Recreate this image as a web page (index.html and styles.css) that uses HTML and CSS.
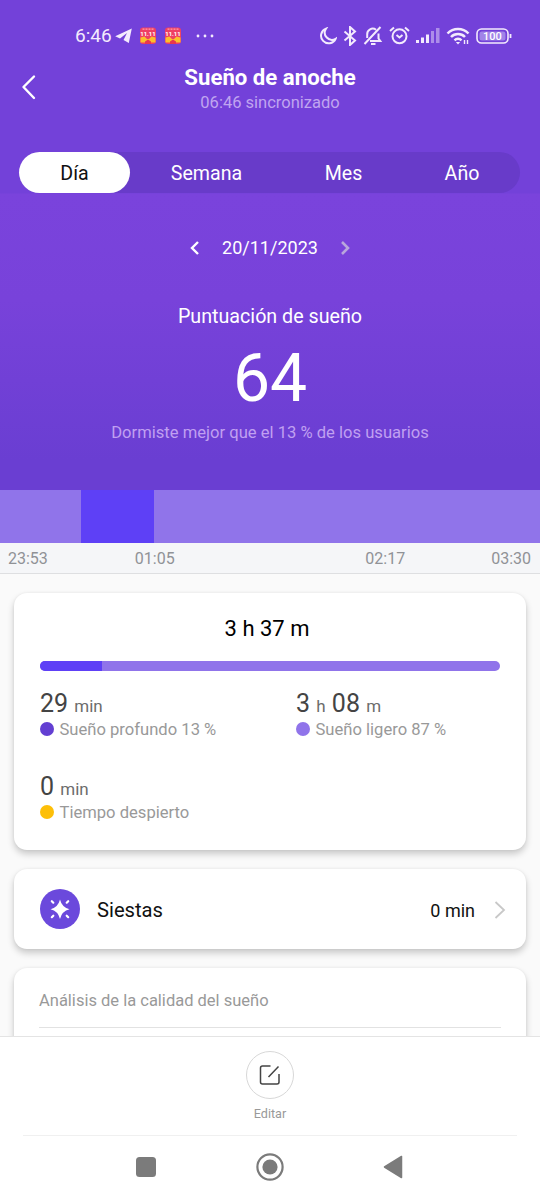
FILE: index.html
```
<!DOCTYPE html>
<html lang="es">
<head>
  <meta charset="UTF-8" />
  <meta name="viewport" content="width=device-width, initial-scale=1.0" />
  <title>Sueño de anoche</title>
  <link rel="stylesheet" href="styles.css">
</head>
<body>
  <div class="app">
    <section class="hero">
      <div class="status-bar">
        <span class="clock">6:46</span>
        <svg class="telegram" width="17" height="16" viewBox="0 0 17 16"><path d="M16.8 0.5L0.2 8.2l4.8 2.4L12 5 8.500 12l5.300 3z" fill="#f3eafd"/></svg>
        <svg class="sale" width="18" height="18" viewBox="0 0 18 18">
          <rect x="1" y="0.5" width="16" height="16.5" rx="3" fill="#ef3f63"/>
          <path d="M3.5 2.2h11" stroke="#ff9fae" stroke-width="1.2" stroke-dasharray="2 1"/>
          <text x="9" y="8.6" class="sale-text">11.11</text>
          <path d="M1.5 10.5l4-1 2.5 2.5h2l2.5-2.5 4 1v5h-15z" fill="#fbc02d"/>
          <path d="M6 14.500l3-2 3 2V17H6z" fill="#e8364f"/>
        </svg>
        <svg class="sale" width="18" height="18" viewBox="0 0 18 18">
          <rect x="1" y="0.5" width="16" height="16.5" rx="3" fill="#ef3f63"/>
          <path d="M3.5 2.2h11" stroke="#ff9fae" stroke-width="1.2" stroke-dasharray="2 1"/>
          <text x="9" y="8.6" class="sale-text">11.11</text>
          <path d="M1.5 10.5l4-1 2.5 2.5h2l2.5-2.5 4 1v5h-15z" fill="#fbc02d"/>
          <path d="M6 14.500l3-2 3 2V17H6z" fill="#e8364f"/>
        </svg>
        <svg class="more" width="18" height="4" viewBox="0 0 18 4" fill="#f3eafd"><circle cx="2" cy="2" r="1.4"/><circle cx="9" cy="2" r="1.4"/><circle cx="16" cy="2" r="1.4"/></svg>

        <div class="status-icons">
          <svg width="18" height="18" viewBox="0 0 18 18"><path d="M7 1.600A7.600 7.600 0 1 0 16.600 11.800 7.200 7.200 0 0 1 7 1.600z"/></svg>
          <svg width="14" height="20" viewBox="0 0 14 20"><path d="M1.5 5.5l10.5 9L7 19V1l5 4.5-10.5 9"/></svg>
          <svg width="20" height="20" viewBox="0 0 20 20"><path d="M17.500 1L1.500 18M4.200 12V8.500a5.500 5.500 0 0 1 8.800-4.800M15.500 7.500v5l1.800 2.500H7"/><path d="M8 18h4.500"/></svg>
          <svg width="21" height="19" viewBox="0 0 21 19"><circle cx="10.5" cy="10.3" r="7"/><path d="M7.5 9l3 2.5 3-2.5M1 5l4-3.500M20 5l-4-3.500"/></svg>
          <svg width="24" height="17" viewBox="0 0 24 17" class="signal"><rect x="0" y="13" width="3" height="3"/><rect x="5" y="10.5" width="3" height="5.5"/><rect x="10" y="7.5" width="3" height="8.5"/><rect x="15" y="4" width="3" height="12" opacity=".45"/><rect x="20" y="1" width="3.5" height="15" opacity=".45"/></svg>
          <svg width="24" height="18" viewBox="0 0 24 18"><path d="M1.500 6.500a14.500 14.500 0 0 1 21 0M5 10a9.800 9.800 0 0 1 14 0M8.500 13.300a5 5 0 0 1 7 0" stroke-width="2.5"/><path d="M9.800 15l2.200 2.500 2.200-2.500z" fill="#f3eafd" stroke="none"/><path d="M18.500 13v4M21.500 13v4" stroke-width="1.4"/></svg>
          <svg width="36" height="16" viewBox="0 0 36 16"><rect x="1" y="1" width="31" height="14" rx="4.5" stroke-width="1.6"/><rect x="3.5" y="3.5" width="26" height="9" rx="2.5" fill="#a184e8" stroke="none"/><path d="M34.500 6v4" stroke-width="1.8"/><text x="16.5" y="12.1" class="battery-text">100</text></svg>
        </div>
      </div>

      <header class="header">
        <svg class="back" width="16" height="26" viewBox="0 0 16 26"><path d="M13 2.500L2.500 13 13 24" fill="none" stroke="#fff" stroke-width="2.4" stroke-linecap="round" stroke-linejoin="round"/></svg>
        <div class="titles">
          <h1>Sueño de anoche</h1>
          <p class="synced">06:46 sincronizado</p>
        </div>
      </header>

      <nav class="tabs">
        <div class="tab active">Día</div>
        <div class="tab week">Semana</div>
        <div class="tab month">Mes</div>
        <div class="tab year">Año</div>
      </nav>

      <div class="date-picker">
        <svg width="10" height="14" viewBox="0 0 10 14"><path d="M8 1L2 7l6 6" fill="none" stroke="#fff" stroke-width="2.4"/></svg>
        <span class="date">20/11/2023</span>
        <svg width="10" height="14" viewBox="0 0 10 14"><path d="M2 1l6 6-6 6" fill="none" stroke="#b9a6dc" stroke-width="2.6"/></svg>
      </div>

      <p class="score-label">Puntuación de sueño</p>
      <p class="score">64</p>
      <p class="score-note">Dormiste mejor que el 13 % de los usuarios</p>
    </section>

    <div class="sleep-chart">
      <div class="light" style="width: 15%"></div>
      <div class="deep" style="width: 13.5%"></div>
      <div class="light" style="width: 71.5%"></div>
    </div>
    <div class="axis">
      <span>23:53</span>
      <span class="t2">01:05</span>
      <span class="t3">02:17</span>
      <span>03:30</span>
    </div>

    <main class="content">
      <section class="card summary">
        <h2>3 h 37 m</h2>
        <div class="bar"><div class="bar-deep" style="width: 13.4%"></div></div>
        <div class="stats">
          <div class="stat">
            <div class="value">29 <small>min</small></div>
            <div class="label"><i class="dot dot-deep"></i>Sueño profundo 13 %</div>
          </div>
          <div class="stat">
            <div class="value">3 <small>h</small> 08 <small>m</small></div>
            <div class="label"><i class="dot dot-light"></i>Sueño ligero 87 %</div>
          </div>
          <div class="stat">
            <div class="value">0 <small>min</small></div>
            <div class="label"><i class="dot dot-awake"></i>Tiempo despierto</div>
          </div>
        </div>
      </section>

      <section class="card naps">
        <svg width="40" height="40" viewBox="0 0 40 40">
          <circle cx="20" cy="20" r="20" fill="#6b49dc"/>
          <path d="M20 10.500Q21.800 18.200 29.500 20.300 21.800 22.200 20 30 18.200 22.200 10.500 20.300 18.200 18.200 20 10.500z" fill="#fff"/>
          <path d="M11.800 12.200l1.500 1.500M28.200 12.200l-1.500 1.500M11.800 28.200l1.500-1.500M28.200 28.200l-1.500-1.500" stroke="#fff" stroke-width="2.2" stroke-linecap="round"/>
        </svg>
        <span class="naps-title">Siestas</span>
        <span class="naps-value">0 min</span>
        <svg class="naps-arrow" width="12" height="18" viewBox="0 0 12 18"><path d="M1.500 1L10 9l-8.500 8" fill="none" stroke="#c8c8c8" stroke-width="1.8"/></svg>
      </section>

      <section class="card analysis">
        <h3>Análisis de la calidad del sueño</h3>
      </section>
    </main>

    <footer class="footer">
      <div class="edit">
        <div class="edit-btn">
          <svg width="22" height="22" viewBox="0 0 22 22"><path d="M11.500 2H3.500Q1.500 2 1.500 4v14q0 2 2 2h14.500q2 0 2-2v-8M9.500 13L19.500 2.500" fill="none" stroke="#444" stroke-width="1.5"/></svg>
        </div>
        <span>Editar</span>
      </div>
    </footer>
    <div class="system-nav">
      <svg width="20" height="20" viewBox="0 0 20 20"><rect width="20" height="20" rx="3.5" fill="#7b7b7b"/></svg>
      <svg width="28" height="28" viewBox="0 0 28 28"><circle cx="14" cy="14" r="12.6" fill="none" stroke="#7b7b7b" stroke-width="2.2"/><circle cx="14" cy="14" r="7.6" fill="#7b7b7b"/></svg>
      <svg width="20" height="24" viewBox="0 0 20 24"><path d="M18.500 1.500v21L1.500 12z" fill="#7b7b7b" stroke="#7b7b7b" stroke-width="1.5" stroke-linejoin="round"/></svg>
    </div>
  </div>
</body>
</html>
```
FILE: styles.css
```
* {
  box-sizing: border-box;
}

body {
  margin: 0;
  font-family: Roboto, sans-serif;
  background: #fff;
}

h1, h2, h3, p {
  margin: 0;
  font-weight: 400;
}

svg {
  display: block;
  flex-shrink: 0;
}

.app {
  display: flex;
  flex-direction: column;
  width: 540px;
  height: 1200px;
  overflow: hidden;
}

.hero {
  height: 490px;
  flex-shrink: 0;
  color: #fff;
  text-align: center;
  background: linear-gradient(#7341d9 0, #7341d9 193px, #7a43dc 194px, #7842da 300px, #6a3ed2 460px, #6a3ed2 100%);
}

.status-bar {
  display: flex;
  align-items: center;
  height: 55px;
  padding: 16px 28px 0 75px;
  color: #f3eafd;
}

.clock {
  font-size: 19px;
  line-height: 20px;
  width: 40px;
  text-align: left;
  white-space: nowrap;
}

.telegram {
  margin-right: 7px;
}

.sale {
  margin-right: 7px;
}

.sale-text {
  font-size: 6px;
  font-weight: 700;
  fill: #fff;
  text-anchor: middle;
}

.more {
  margin-left: 7px;
}

.status-icons {
  display: flex;
  align-items: center;
  margin-left: auto;
  gap: 6px;
}

.status-icons svg {
  fill: none;
  stroke: #f3eafd;
  stroke-width: 2;
}

.status-icons .signal {
  fill: #f3eafd;
  stroke: none;
}

.status-icons .battery-text {
  font-size: 11px;
  font-weight: 500;
  fill: #fff;
  stroke: none;
  text-anchor: middle;
}

.header {
  display: flex;
  height: 97px;
  padding: 8px 21px 0;
}

.back {
  margin-top: 11px;
}

.titles {
  flex: 1;
  margin-right: 16px;
}

h1 {
  font-size: 22.2px;
  font-weight: 700;
  line-height: 29px;
}

.synced {
  font-size: 16.5px;
  line-height: 22px;
  color: #c0a5f0;
}

.tabs {
  display: flex;
  height: 41px;
  margin: 0 20px 0 19px;
  border-radius: 21px;
  background: #683bc9;
  font-size: 19.6px;
  line-height: 43px;
}

.tab.active {
  width: 111px;
  border-radius: 21px;
  background: #fff;
  color: #111;
}

.week {
  width: 153px;
}

.month {
  width: 121px;
}

.year {
  width: 116px;
}

.date-picker {
  display: flex;
  justify-content: center;
  align-items: center;
  gap: 22px;
  height: 24px;
  margin-top: 43px;
  font-size: 18px;
}

.date {
  margin-top: -2px;
}

.score-label {
  margin-top: 44px;
  font-size: 19.7px;
  line-height: 26px;
}

.score {
  margin-top: 11px;
  font-size: 66px;
  line-height: 76px;
}

.score-note {
  margin-top: 4px;
  font-size: 16.6px;
  line-height: 24px;
  color: #c0a0f1;
}

.sleep-chart {
  display: flex;
  height: 53px;
  flex-shrink: 0;
}

.light {
  background: #9074ea;
}

.deep {
  background: #5e40f6;
}

.axis {
  display: flex;
  height: 31px;
  flex-shrink: 0;
  padding: 0 9px 0 8px;
  border-bottom: 1px solid #dedfe1;
  background: #f5f6f8;
  font-size: 16px;
  line-height: 31px;
  color: #909296;
}

.t2 {
  margin-left: 87px;
}

.t3 {
  margin-left: auto;
  margin-right: 86px;
}

.content {
  flex: 1;
  min-height: 0;
  overflow: hidden;
  padding: 19px 14px 0;
  background: #fafafa;
}

.card {
  border-radius: 13px;
  background: #fff;
  box-shadow: 0 4px 7px rgba(0, 0, 0, 0.2), 0 0 3px rgba(0, 0, 0, 0.06);
}

.summary {
  height: 257px;
  padding: 21px 26px 0;
}

h2 {
  margin-right: 6px;
  font-size: 22px;
  line-height: 30px;
  text-align: center;
  color: #000;
}

.bar {
  height: 10px;
  margin-top: 17px;
  border-radius: 5px;
  background: #9074ea;
  overflow: hidden;
}

.bar-deep {
  height: 100%;
  background: #5e40f6;
}

.stats {
  display: grid;
  grid-template-columns: 256px 1fr;
  row-gap: 32px;
  margin-top: 18px;
}

.value {
  height: 31px;
  font-size: 25px;
  line-height: 29px;
  color: #444;
}

.value small {
  font-size: 17px;
  color: #6c6c6c;
}

.label {
  display: flex;
  align-items: center;
  font-size: 16.6px;
  line-height: 20px;
  color: #999;
}

.dot {
  width: 14px;
  height: 14px;
  margin: 0 5.5px 2px 0;
  border-radius: 50%;
}

.dot-deep {
  background: #633fd2;
}

.dot-light {
  background: #9074ea;
}

.dot-awake {
  background: #fdbf08;
}

.naps {
  display: flex;
  align-items: center;
  height: 80px;
  margin-top: 19px;
  padding: 0 20px 0 26px;
  color: #111;
}

.naps-title {
  margin: 2px 0 0 17px;
  font-size: 20.2px;
}

.naps-value {
  margin: 2px 19px 0 auto;
  font-size: 18px;
}

.naps-arrow {
  margin-top: 2px;
}

.analysis {
  height: 120px;
  margin-top: 19px;
  padding: 21px 25px 0;
}

h3 {
  padding-bottom: 14px;
  border-bottom: 1px solid #e2e2e2;
  font-size: 16.5px;
  line-height: 24px;
  color: #999;
}

.footer {
  height: 100px;
  flex-shrink: 0;
  padding: 14px 23px 0;
  border-top: 1px solid #e4e4e4;
  background: #fff;
}

.edit {
  display: flex;
  flex-direction: column;
  align-items: center;
  height: 85px;
  border-bottom: 1px solid #f0f0f0;
  font-size: 12.6px;
  color: #999;
}

.edit-btn {
  display: flex;
  justify-content: center;
  align-items: center;
  width: 48px;
  height: 48px;
  margin-bottom: 7px;
  border: 1px solid #d8d8d8;
  border-radius: 50%;
}

.system-nav {
  display: flex;
  justify-content: space-between;
  align-items: center;
  height: 64px;
  flex-shrink: 0;
  padding: 0 137px 2px 136px;
  background: #fff;
}
```
